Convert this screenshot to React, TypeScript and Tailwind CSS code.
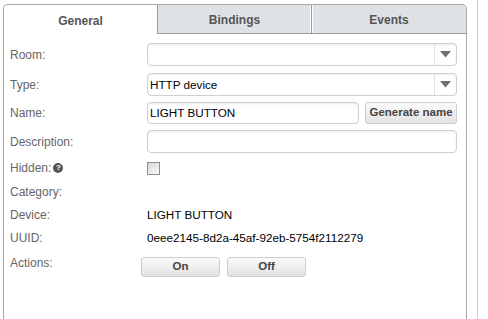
import React from "react";

const font = { fontFamily: '"Liberation Sans", Arial, sans-serif' };

function Label({ children }: { children: React.ReactNode }) {
  return <div className="w-[137px] shrink-0 text-[12px] text-[#666] leading-[14px]">{children}</div>;
}

function Select({ value }: { value: string }) {
  return (
    <div className="flex h-[23px] w-[310px] rounded-[4px] border border-[#cfcfcf] bg-white shadow-[inset_0_1px_2px_rgba(0,0,0,0.08)]">
      <div className="flex flex-1 items-center pl-[2px] text-[11.7px] text-black">{value}</div>
      <div className="flex w-[22px] items-center justify-center border-l border-[#e0e0e0]">
        <svg width="11" height="7" viewBox="0 0 11 7">
          <polygon points="0,0 11,0 5.5,6.5" fill="#6f6f6f" />
        </svg>
      </div>
    </div>
  );
}

function Btn({ children, className }: { children: React.ReactNode; className: string }) {
  return (
    <div
      className={
        "flex items-center justify-center rounded-[3px] border border-[#cdcdcd] bg-gradient-to-b from-[#fbfbfb] to-[#e2e2e2] text-[11.5px] font-bold text-[#444] " +
        className
      }
    >
      {children}
    </div>
  );
}

export default function App() {
  return (
    <div className="flex h-[319px] w-[488px] overflow-hidden bg-white" style={font}>
      <div className="w-[467px] shrink-0 pl-[3px] pt-[4px]">
        <div className="h-[330px] w-[464px] rounded-t-[5px] border border-b-0 border-[#a9a9a9]">
          <div className="flex h-[29px]">
            <div className="flex w-[153px] items-center justify-center rounded-tl-[4px] pt-[2px] text-[12px] font-bold text-[#555]">
              General
            </div>
            <div className="flex w-[154px] items-center justify-center border-b border-l border-[#9a9a9a] bg-[#dfe2e5] pt-[2px] text-[12px] font-bold text-[#555] shadow-[inset_-1px_0_0_#fff]">
              Bindings
            </div>
            <div className="flex w-[155px] items-center justify-center rounded-tr-[4px] border-b border-l border-[#9a9a9a] bg-[#dfe2e5] pt-[2px] text-[12px] font-bold text-[#555] shadow-[inset_1px_0_0_#fff]">
              Events
            </div>
          </div>
          <div className="flex flex-col pl-[6px] pt-[8px]">
            <div className="flex h-[25px] items-center">
              <Label>Room:</Label>
              <Select value="" />
            </div>
            <div className="mt-[5px] flex h-[25px] items-center">
              <Label>Type:</Label>
              <Select value="HTTP device" />
            </div>
            <div className="mt-[4px] flex h-[24px] items-center">
              <Label>Name:</Label>
              <div className="flex h-[22px] w-[212px] items-center rounded-[4px] border border-[#cfcfcf] bg-white pl-[2px] text-[11.7px] text-black shadow-[inset_0_1px_2px_rgba(0,0,0,0.08)]">
                LIGHT BUTTON
              </div>
              <Btn className="ml-[6px] h-[22px] w-[92px]">Generate name</Btn>
            </div>
            <div className="mt-[4px] flex h-[25px] items-center">
              <Label>Description:</Label>
              <div className="h-[23px] w-[310px] rounded-[4px] border border-[#cfcfcf] bg-white shadow-[inset_0_1px_2px_rgba(0,0,0,0.08)]" />
            </div>
            <div className="mt-[2px] flex h-[24px] items-center">
              <Label>
                <span className="flex items-center">
                  Hidden:
                  <span className="ml-[2px] flex h-[10px] w-[10px] items-center justify-center rounded-full bg-[#555] text-[8px] font-bold leading-none text-white">
                    ?
                  </span>
                </span>
              </Label>
              <div className="h-[13px] w-[13px] border border-[#8e8e8e] bg-gradient-to-br from-[#d8d8d8] to-[#fafafa]" />
            </div>
            <div className="flex h-[23px] items-center">
              <Label>Category:</Label>
            </div>
            <div className="flex h-[23px] items-center">
              <Label>Device:</Label>
              <div className="text-[11.7px] text-black">LIGHT BUTTON</div>
            </div>
            <div className="flex h-[24px] items-center">
              <Label>UUID:</Label>
              <div className="text-[11.7px] text-black">0eee2145-8d2a-45af-92eb-5754f2112279</div>
            </div>
            <div className="mt-[5px] flex items-start">
              <div className="w-[131px] shrink-0 text-[12px] leading-[16px] text-[#666]">Actions:</div>
              <div className="mt-[2px] flex gap-[7px]">
                <Btn className="h-[20px] w-[79px]">On</Btn>
                <Btn className="h-[20px] w-[79px]">Off</Btn>
              </div>
            </div>
          </div>
        </div>
      </div>
      <div className="ml-[10px] h-full w-[1px] shrink-0 bg-[#cfcfcf]" />
    </div>
  );
}
